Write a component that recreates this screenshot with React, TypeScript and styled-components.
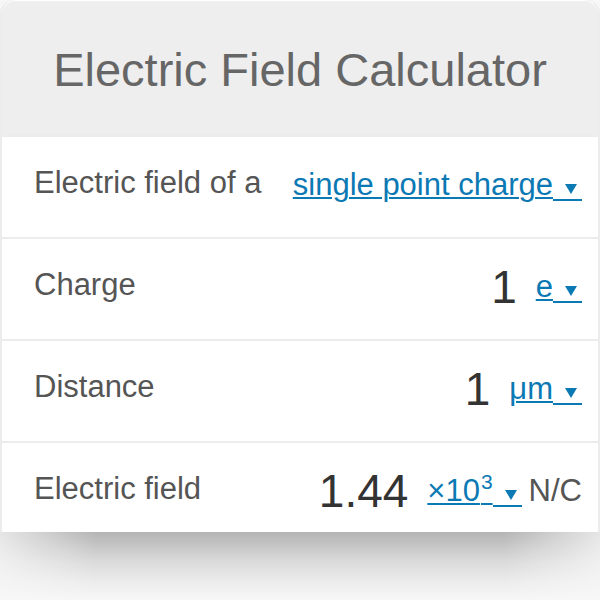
import styled, { createGlobalStyle } from "styled-components";

const GlobalStyle = createGlobalStyle`
  html, body {
    margin: 0;
    padding: 0;
    background: #f7f7f7;
  }
  body {
    font-family: "Liberation Sans", Arial, sans-serif;
  }
`;

interface IRow {
  label: string;
  value?: string;
  unit: string;
  power?: string;
  suffix?: string;
}

const rows: IRow[] = [
  { label: "Electric field of a", unit: "single point charge" },
  { label: "Charge", value: "1", unit: "e" },
  { label: "Distance", value: "1", unit: "μm" },
  { label: "Electric field", value: "1.44", unit: "×10", power: "3", suffix: "N/C" },
];

const App = () => {
  return (
    <>
      <GlobalStyle />
      <Card>
        <Header>Electric Field Calculator</Header>
        {rows.map((row, i) => (
          <Row key={i}>
            <Label>{row.label}</Label>
            <Right>
              {row.value && <Value>{row.value}</Value>}
              <UnitSelect>
                <UnitText>
                  {row.unit}
                  {row.power && <Sup>{row.power}</Sup>}
                </UnitText>
                <CaretBox>
                  <Caret />
                </CaretBox>
              </UnitSelect>
              {row.suffix && <Suffix>{row.suffix}</Suffix>}
            </Right>
          </Row>
        ))}
      </Card>
      <CardShadow />
    </>
  );
};

const Card = styled.div`
  width: 600px;
  height: 532px;
  overflow: hidden;
  box-sizing: border-box;
  border-left: 2px solid #ececec;
  border-right: 2px solid #ececec;
  border-radius: 14px 14px 0 0;
  background: #ececec;
`;

const CardShadow = styled.div`
  height: 68px;
  background: linear-gradient(
    to bottom,
    rgba(0, 0, 0, 0.27) 0%,
    rgba(0, 0, 0, 0.2) 20%,
    rgba(0, 0, 0, 0.11) 45%,
    rgba(0, 0, 0, 0.04) 75%,
    rgba(0, 0, 0, 0) 100%
  );
  -webkit-mask-image: linear-gradient(
    to right,
    rgba(0, 0, 0, 0.25),
    #000 16%,
    #000 84%,
    rgba(0, 0, 0, 0.25)
  );
  mask-image: linear-gradient(
    to right,
    rgba(0, 0, 0, 0.25),
    #000 16%,
    #000 84%,
    rgba(0, 0, 0, 0.25)
  );
`;

const Header = styled.div`
  height: 135px;
  display: flex;
  align-items: center;
  justify-content: center;
  background: #eeeeee;
  border-radius: 14px 14px 0 0;
  box-shadow: inset 0 1px 0 #ffffff;
  color: #666666;
  font-size: 47px;
  padding-top: 4px;
  box-sizing: border-box;
`;

const Row = styled.div`
  height: 100px;
  box-sizing: border-box;
  display: flex;
  align-items: center;
  justify-content: space-between;
  padding: 0 16px 4px 32px;
  background: #ffffff;
  margin-top: 2px;
  &:first-of-type {
    margin-top: 0;
    height: 101px;
  }
`;

const Label = styled.div`
  font-size: 31px;
  color: #555555;
  margin-bottom: 4px;
`;

const Right = styled.div`
  display: flex;
  align-items: center;
`;

const Value = styled.span`
  font-size: 46px;
  color: #333333;
  margin-right: 19px;
`;

const UnitSelect = styled.span`
  color: #0b79b4;
  font-size: 31px;
  white-space: nowrap;
`;

const UnitText = styled.span`
  text-decoration: underline;
  text-decoration-thickness: 2px;
  text-underline-offset: 2px;
`;

const CaretBox = styled.span`
  display: inline-block;
  vertical-align: baseline;
  width: 29px;
  height: 18px;
  margin-bottom: -6px;
  border-bottom: 2px solid #0b79b4;
`;

const Caret = styled.span`
  display: block;
  width: 0;
  height: 0;
  margin: 3px 5px 0 auto;
  border-left: 6px solid transparent;
  border-right: 6px solid transparent;
  border-top: 10px solid #0b79b4;
`;

const Sup = styled.sup`
  font-size: 21px;
  vertical-align: 12px;
  line-height: 0;
  margin-left: 1px;
`;

const Suffix = styled.span`
  font-size: 31px;
  color: #555555;
  margin-left: 7px;
`;

export default App;
